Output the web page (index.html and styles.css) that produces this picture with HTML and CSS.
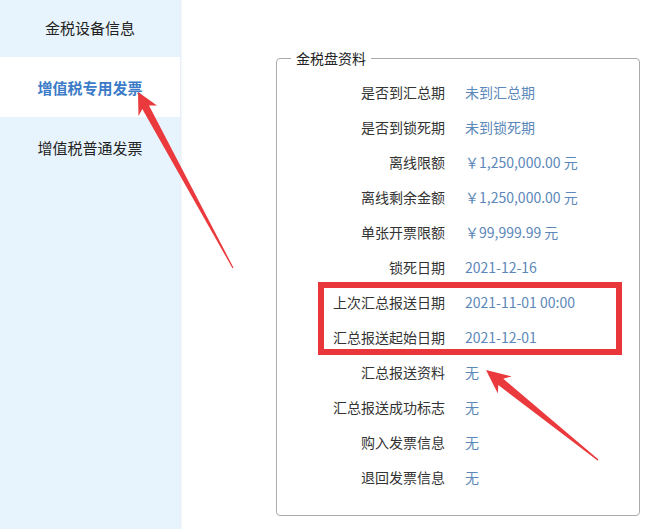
FILE: index.html
```html
<!DOCTYPE html>
<html lang="zh">
<head>
<meta charset="utf-8">
<title>金税盘资料</title>
<link rel="stylesheet" href="styles.css">
</head>
<body>
<div class="page">
  <nav class="sidebar">
    <div class="nav-item">金税设备信息</div>
    <div class="nav-item active">增值税专用发票</div>
    <div class="nav-item">增值税普通发票</div>
  </nav>
  <main class="main">
    <fieldset class="panel">
      <legend class="panel-title">金税盘资料</legend>
      <div class="rows">
        <div class="label">是否到汇总期</div><div class="value">未到汇总期</div>
        <div class="label">是否到锁死期</div><div class="value">未到锁死期</div>
        <div class="label">离线限额</div><div class="value">￥1,250,000.00 元</div>
        <div class="label">离线剩余金额</div><div class="value">￥1,250,000.00 元</div>
        <div class="label">单张开票限额</div><div class="value">￥99,999.99 元</div>
        <div class="label">锁死日期</div><div class="value">2021-12-16</div>
        <div class="label">上次汇总报送日期</div><div class="value">2021-11-01 00:00</div>
        <div class="label">汇总报送起始日期</div><div class="value">2021-12-01</div>
        <div class="label">汇总报送资料</div><div class="value">无</div>
        <div class="label">汇总报送成功标志</div><div class="value">无</div>
        <div class="label">购入发票信息</div><div class="value">无</div>
        <div class="label">退回发票信息</div><div class="value">无</div>
      </div>
    </fieldset>
  </main>
</div>
<div class="highlight-box"></div>
<svg class="annotations" width="662" height="529" viewBox="0 0 662 529">
  <polygon class="arrow" points="138,92 157,105.5 149,105.4 233.5,267.7 232.5,268.3 142.3,109 138.5,116"/>
  <polygon class="arrow" points="486,370 511.6,376.4 503.3,378.8 598.5,459.4 597.5,460.6 498.3,385.0 497.8,393.6"/>
</svg>
</body>
</html>
```

FILE: styles.css
```css
html, body {
  margin: 0;
  padding: 0;
  background: #ffffff;
}
body {
  width: 662px;
  height: 529px;
  overflow: hidden;
  position: relative;
  font-family: "Noto Sans CJK SC", "Noto Sans", sans-serif;
  font-size: 14px;
  color: #333333;
}
.page {
  display: flex;
  height: 529px;
}
.sidebar {
  width: 180px;
  flex: none;
  background: #e8f4fd;
  box-shadow: 1px 0 2px rgba(200, 220, 235, 0.6);
  margin-top: -3px;
  display: flex;
  flex-direction: column;
}
.nav-item {
  height: 60px;
  display: flex;
  align-items: center;
  justify-content: center;
  font-size: 15px;
  color: #222222;
}
.nav-item.active {
  background: #ffffff;
  color: #3b7bc8;
  font-weight: bold;
}
.main {
  flex: 1;
  padding: 48px 0 0 96px;
}
.panel {
  margin: 0;
  width: 362px;
  box-sizing: content-box;
  padding: 6px 0 21px 0;
  border: 1px solid #ababab;
  border-radius: 4px;
}
.panel-title {
  margin-left: 14px;
  padding: 0 5px;
  font-size: 14px;
  line-height: 20px;
  color: #222222;
}
.rows {
  display: grid;
  grid-template-columns: 168px 1fr;
  grid-auto-rows: 35px;
  column-gap: 20px;
  align-items: center;
}
.label {
  text-align: right;
  color: #333333;
  white-space: nowrap;
}
.value {
  color: #5b87b9;
  white-space: nowrap;
}
.highlight-box {
  position: absolute;
  left: 318px;
  top: 282px;
  width: 292px;
  height: 61px;
  border: 6px solid #e8363b;
}
.annotations {
  position: absolute;
  left: 0;
  top: 0;
  pointer-events: none;
}
.arrow {
  fill: #ea3a3d;
}
```
